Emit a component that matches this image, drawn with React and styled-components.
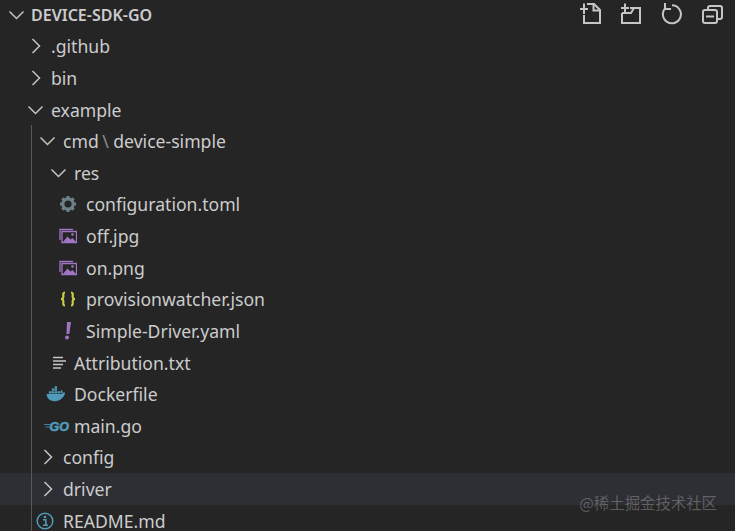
import React from "react";
import styled, { createGlobalStyle } from "styled-components";

const GlobalStyle = createGlobalStyle`
  html, body { margin: 0; padding: 0; background: #252526; }
  body { width: 735px; height: 531px; overflow: hidden; }
`;

const Explorer = styled.div`
  position: relative;
  width: 735px;
  height: 531px;
  overflow: hidden;
  background: #252526;
  color: #cccccc;
  font-family: "Noto Sans", "Open Sans", sans-serif;
  font-size: 17.6px;
`;

const Guide = styled.div`
  position: absolute;
  left: 31px;
  top: 125px;
  bottom: 0;
  width: 1px;
  background: #585858;
`;

const Row = styled.div`
  display: flex;
  align-items: center;
  height: 31.625px;
  padding-left: ${(p) => p.$indent}px;
  background: ${(p) => (p.$hover ? "#2e2e35" : "transparent")};
  white-space: nowrap;
`;

const Slot = styled.span`
  flex: none;
  width: ${(p) => p.$width}px;
  display: flex;
  align-items: center;
  svg {
    flex: none;
  }
`;

const HeaderRow = styled(Row)`
  height: 30.5px;
`;

const RootTitle = styled.span`
  font-size: 16px;
  font-weight: 600;
  margin-left: 6px;
  color: #cccccc;
`;

const Actions = styled.div`
  margin-left: auto;
  margin-right: 12px;
  display: flex;
  gap: 16px;
  align-items: center;
`;

const Sep = styled.span`
  color: #8c8c8c;
  margin: 0 4.5px 0 3.5px;
`;

const Watermark = styled.div`
  position: absolute;
  right: 18px;
  bottom: 18px;
  font-family: "Noto Sans CJK SC", sans-serif;
  font-size: 15.4px;
  color: rgba(255, 255, 255, 0.25);
`;

const Chevron = ({ open }) => (
  <svg width="16" height="16" viewBox="0 0 16 16" fill="none" stroke="#c5c5c5" strokeWidth="1.5">
    {open ? <path d="M0.5 4.500l7 7 7-7" /> : <path d="M4.500 1l7 7-7 7" />}
  </svg>
);

const Action = ({ children }) => (
  <svg width="24" height="24" viewBox="0 0 24 24" fill="none" stroke="#c5c5c5" strokeWidth="2">
    {children}
  </svg>
);

const GearIcon = () => (
  <svg width="18" height="18" viewBox="0 0 18 18">
    <circle cx="9" cy="9" r="5.200" fill="none" stroke="#6d8086" strokeWidth="3.200" />
    <path
      d="M9 1v3M9 14v3M1 9h3M14 9h3M3.300 3.300l2.200 2.200M12.500 12.500l2.200 2.200M3.300 14.700l2.200-2.200M12.500 5.500l2.200-2.200"
      stroke="#6d8086"
      strokeWidth="3"
    />
  </svg>
);

const ImageIcon = () => (
  <svg width="18" height="16" viewBox="0 0 18 16" fill="none">
    <path d="M1 12V1.500h13" stroke="#a074c4" strokeWidth="1.300" />
    <path d="M3 3.500h14.500v11H3z" stroke="#a074c4" strokeWidth="1.300" fill="#252526" />
    <path d="M4 14l4.500-5.500 3 3 2-1.500 3.500 4z" fill="#a074c4" />
    <circle cx="13.500" cy="6.500" r="1.300" fill="#a074c4" />
  </svg>
);

const JsonIcon = () => (
  <svg width="18" height="18" viewBox="0 0 18 18" fill="none" stroke="#cbcb41" strokeWidth="2.200">
    <path d="M6 2.500C3.500 2.500 4.500 5 4.300 7 4.200 8.300 3.300 9 2 9c1.300 0 2.200.7 2.300 2 .2 2-.8 4.500 1.700 4.500" />
    <path d="M12 2.500c2.500 0 1.500 2.500 1.700 4.500.1 1.300 1 2 2.300 2-1.300 0-2.200.7-2.300 2-.2 2 .8 4.500-1.700 4.500" />
  </svg>
);

const YamlIcon = () => (
  <svg width="18" height="20" viewBox="0 0 18 20" fill="#a074c4">
    <path d="M8 1h4l-1.700 12H7.500z" />
    <circle cx="8" cy="16.500" r="2" />
  </svg>
);

const TextIcon = () => (
  <svg width="15" height="14" viewBox="0 0 15 14" stroke="#c5c5c5" strokeWidth="1.700">
    <path d="M1 1.500h10M1 5h13M1 8.500h10M1 12h8" />
  </svg>
);

const DockerIcon = () => (
  <svg width="21" height="16" viewBox="0 0 22 16" fill="#519aba">
    <path d="M0.500 8h16c.6-1.400 2-2 3.500-1.500-.6 5-5 9-11 9-5.500 0-8-3.500-8.500-7.500z" />
    <path d="M3 5h2.600v2.500H3zM6 5h2.600v2.500H6zM9 5h2.600v2.500H9zM12 5h2.600v2.500H12zM6 2.300h2.600v2.400H6zM9 2.300h2.600v2.400H9zM9 0h2.600v2H9z" />
    <path d="M15.500 7.500c-.6-1.500-.3-3 .6-4 1 .8 1.500 2 1.300 3.200z" />
  </svg>
);

const GoIcon = () => (
  <svg width="26" height="14" viewBox="0 0 26 14">
    <path d="M0 5.500h6M1.500 8h4.500" stroke="#519aba" strokeWidth="0.800" />
    <text
      x="5.500"
      y="11.500"
      fontFamily="Liberation Sans, sans-serif"
      fontSize="12.500"
      fontWeight="700"
      fontStyle="italic"
      fill="#519aba"
      stroke="#519aba"
      strokeWidth="0.600"
    >
      GO
    </text>
  </svg>
);

const InfoIcon = () => (
  <svg width="18" height="18" viewBox="0 0 18 18" fill="none">
    <circle cx="9" cy="9" r="7.800" stroke="#519aba" strokeWidth="1.500" />
    <circle cx="9" cy="5" r="1.300" fill="#519aba" />
    <path d="M7 7.800h2.800v5.200M7 13.300h5" stroke="#519aba" strokeWidth="1.600" />
  </svg>
);

const rows = [
  { label: ".github", indent: 28, twistie: "closed" },
  { label: "bin", indent: 28, twistie: "closed" },
  { label: "example", indent: 28, twistie: "open" },
  { label: "cmd", extra: "device-simple", indent: 40, twistie: "open" },
  { label: "res", indent: 51, twistie: "open" },
  { label: "configuration.toml", indent: 59, slot: 27, icon: <GearIcon /> },
  { label: "off.jpg", indent: 59, slot: 27, icon: <ImageIcon /> },
  { label: "on.png", indent: 59, slot: 27, icon: <ImageIcon /> },
  { label: "provisionwatcher.json", indent: 59, slot: 27, icon: <JsonIcon /> },
  { label: "Simple-Driver.yaml", indent: 59, slot: 27, icon: <YamlIcon /> },
  { label: "Attribution.txt", indent: 52, slot: 22, icon: <TextIcon /> },
  { label: "Dockerfile", indent: 46, slot: 28, icon: <DockerIcon /> },
  { label: "main.go", indent: 44, slot: 30, icon: <GoIcon /> },
  { label: "config", indent: 40, twistie: "closed" },
  { label: "driver", indent: 40, twistie: "closed", hover: true },
  { label: "README.md", indent: 36, slot: 27, icon: <InfoIcon /> },
];

export default function App() {
  return (
    <Explorer>
      <GlobalStyle />
      <HeaderRow $indent={9}>
        <Chevron open />
        <RootTitle>DEVICE-SDK-GO</RootTitle>
        <Actions>
          <Action>
            <path d="M8 1h7l6 6v13H5V12" />
            <path d="M14.500 1v6.500H21" />
            <path d="M5 0.500V11M1 6h8" />
          </Action>
          <Action>
            <path d="M11 5h10v15H3V10" />
            <path d="M3 10h9l3-5" />
            <path d="M6 0.500V9M2 5h8" />
          </Action>
          <Action>
            <path d="M7 4.500A9 9 0 1 0 13 2.300" />
            <path d="M6 0v6h6" />
          </Action>
          <Action>
            <path d="M9 7V5a2 2 0 0 1 2-2h10a2 2 0 0 1 2 2v9a2 2 0 0 1-2 2h-3" />
            <rect x="4" y="7" width="14" height="13" rx="2" />
            <path d="M7 13.500h8" />
          </Action>
        </Actions>
      </HeaderRow>
      {rows.map((r) => (
        <Row key={r.label} $indent={r.indent} $hover={r.hover}>
          <Slot $width={r.twistie ? 23 : r.slot}>
            {r.twistie ? <Chevron open={r.twistie === "open"} /> : r.icon}
          </Slot>
          <span>
            {r.label}
            {r.extra && (
              <>
                <Sep>\</Sep>
                {r.extra}
              </>
            )}
          </span>
        </Row>
      ))}
      <Guide />
      <Watermark>@稀土掘金技术社区</Watermark>
    </Explorer>
  );
}
